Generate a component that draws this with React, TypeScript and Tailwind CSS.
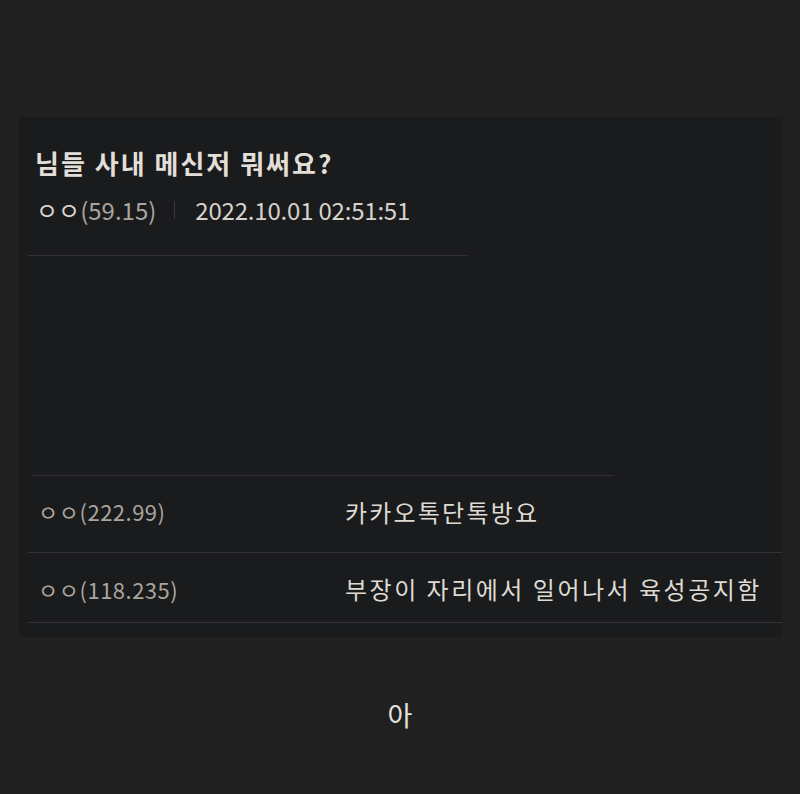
import React from "react";

const font = "font-['Noto_Sans_CJK_KR','Noto_Sans',sans-serif]";

export default function App() {
  return (
    <div className={`min-h-[794px] bg-[#202020] pt-[117px] ${font}`}>
      <div className="ml-[19px] w-[763px] h-[520px] bg-[#1a1b1d] flex flex-col">
        <div className="pt-[30px] pl-[16px]">
          <h1 className="text-[26px] leading-[32px] font-bold tracking-[2px] text-[#e2dfd8]">
            님들 사내 메신저 뭐써요?
          </h1>
          <div className="mt-[17px] flex items-center text-[24px] leading-[28px] pl-[1px]">
            <span className="text-[#d8d4cc]">ㅇㅇ</span>
            <span className="text-[#a9a59e]">(59.15)</span>
            <span className="ml-[18px] mr-[20px] h-[18px] w-px bg-[#3a3a3a]" />
            <span className="text-[#d6d2ca] tracking-[-0.2px]">2022.10.01 02:51:51</span>
          </div>
        </div>
        <div className="mt-[31px] ml-[9px] w-[439px] h-px bg-[#333335]" />
        <div className="mt-[219px] ml-[14px] w-[580px] h-px bg-[#333335]" />
        <div className="h-[76px] flex items-center pl-[19px] pb-[5px] text-[22px]">
          <span className="w-[307px] text-[#a9a59e] tracking-[0.5px]">ㅇㅇ(222.99)</span>
          <span className="text-[#dedad2] text-[24px] tracking-[2.2px]">카카오톡단톡방요</span>
        </div>
        <div className="ml-[9px] h-px bg-[#333335]" />
        <div className="h-[69px] flex items-center pl-[19px] pt-[3px] text-[22px]">
          <span className="w-[307px] text-[#a9a59e] tracking-[0.5px]">ㅇㅇ(118.235)</span>
          <span className="text-[#dedad2] text-[24px] tracking-[2.5px]">부장이 자리에서 일어나서 육성공지함</span>
        </div>
        <div className="ml-[9px] h-px bg-[#333335]" />
      </div>
      <div className="mt-[62px] text-center text-[27px] leading-[32px] text-[#e6e3dc]">아</div>
    </div>
  );
}
